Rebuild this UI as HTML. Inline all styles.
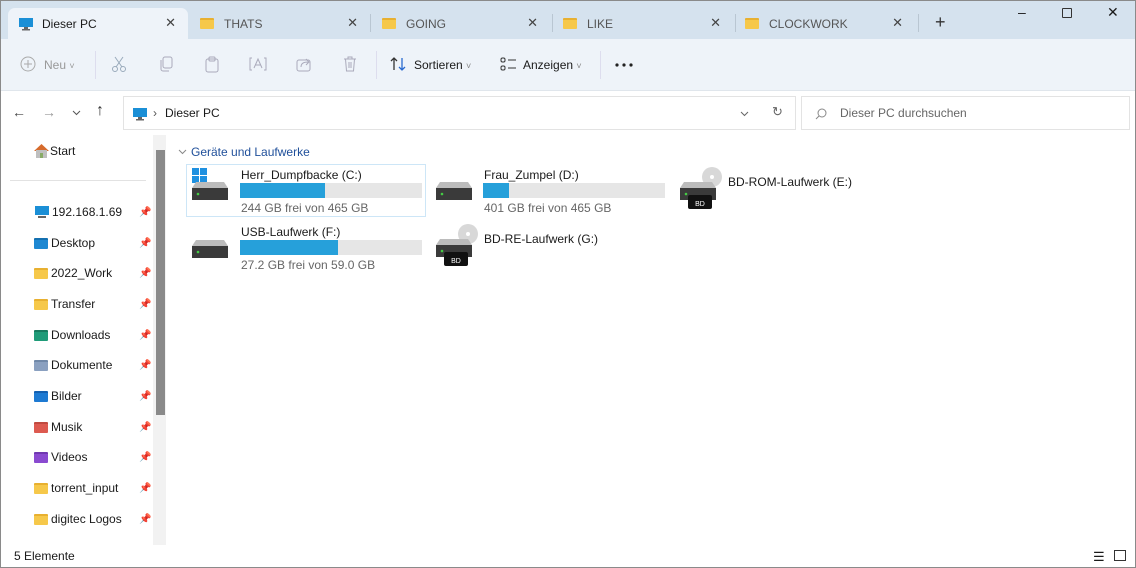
<!DOCTYPE html>
<html><head><meta charset="utf-8"><style>
*{margin:0;padding:0;box-sizing:border-box}
body{width:1136px;height:568px;overflow:hidden;font-family:"Segoe UI","Liberation Sans",sans-serif;font-size:12px;color:#1a1a1a;background:#fff;position:relative}
.frame{position:absolute;inset:0;border:1px solid #8a8a8a;pointer-events:none;z-index:9}
.tabs{position:absolute;left:0;top:0;width:1136px;height:39px;background:#d5e2ee}
.tab{position:absolute;top:8px;height:31px;font-size:12px;display:flex;align-items:center;color:#555}
.tab.act{background:#eef3f9;border-radius:7px 7px 0 0;color:#1a1a1a}
.tab .x{position:absolute;right:12px;top:7px;font-size:13px;color:#444}
.sep{position:absolute;top:14px;width:1px;height:18px;background:#b9c6d2}
.tb{position:absolute;left:0;top:39px;width:1136px;height:52px;background:#eef3f9;border-bottom:1px solid #e0e6ec}
.tb span{position:absolute;top:19px;font-size:12px}
.tb svg{position:absolute;top:17px}
.addr{position:absolute;left:123px;top:96px;width:673px;height:34px;border:1px solid #e3e3e3;background:#fff}
.search{position:absolute;left:801px;top:96px;width:329px;height:34px;border:1px solid #e3e3e3}
.side div.i{position:absolute;left:34px;font-size:12px;display:flex;align-items:center}
.pin{position:absolute;left:139px;color:#888;font-size:10px}
.fold{display:inline-block;width:14px;height:11px;background:#f6c84a;border-radius:1px;margin-right:3px;border-top:2px solid #e8b030}
.bar{position:absolute;height:15px;background:#e6e6e6;width:182px}
.bar i{display:block;height:100%;background:#26a0da}
.muted{color:#666}
</style></head><body>
<div class="tabs">
 <div class="tab act" style="left:8px;width:180px"><svg width="16" height="14" style="margin:0 8px 0 10px"><rect x="1" y="1" width="14" height="9" fill="#1b8fd6"/><rect x="6" y="10" width="4" height="2" fill="#666"/><rect x="4" y="12" width="8" height="1.5" fill="#666"/></svg>Dieser PC<span class="x">✕</span></div>
 <div class="tab" style="left:190px;width:180px"><span class="fold" style="margin:0 10px 0 10px"></span>THATS<span class="x">✕</span></div>
 <div class="sep" style="left:370px"></div>
 <div class="tab" style="left:370px;width:180px"><span class="fold" style="margin:0 10px 0 12px"></span>GOING<span class="x">✕</span></div>
 <div class="sep" style="left:552px"></div>
 <div class="tab" style="left:553px;width:180px"><span class="fold" style="margin:0 10px 0 10px"></span>LIKE<span class="x">✕</span></div>
 <div class="sep" style="left:735px"></div>
 <div class="tab" style="left:735px;width:180px"><span class="fold" style="margin:0 10px 0 10px"></span>CLOCKWORK<span class="x">✕</span></div>
 <div class="sep" style="left:918px"></div>
 <div style="position:absolute;left:935px;top:12px;font-size:18px;color:#333">+</div>
 <div style="position:absolute;left:1018px;top:4px;font-size:14px">–</div>
 <div style="position:absolute;left:1062px;top:8px;width:10px;height:10px;border:1px solid #333;border-radius:1px"></div>
 <div style="position:absolute;left:1107px;top:4px;font-size:14px">✕</div>
</div>
<div class="tb">
 <svg style="left:20px" width="16" height="16" fill="none" stroke="#aaa"><circle cx="8" cy="8" r="7"/><path d="M8 4V12M4 8H12"/></svg><span style="left:44px;color:#999">Neu <span style="position:static;font-size:9px">˅</span></span>
 <div style="position:absolute;left:95px;top:12px;width:1px;height:28px;background:#dde"></div>
 <svg style="left:111px" width="16" height="17" fill="none" stroke="#9ab"><path d="M4 1L11 11M12 1L5 11"/><circle cx="4" cy="13" r="2.5"/><circle cx="12" cy="13" r="2.5"/></svg>
 <svg style="left:158px" width="16" height="16" fill="none" stroke="#aab"><rect x="5" y="1" width="9" height="11" rx="2"/><path d="M3 4V13a2 2 0 0 0 2 2H11"/></svg>
 <svg style="left:204px" width="16" height="17" fill="none" stroke="#aab"><rect x="2" y="3" width="12" height="13" rx="2"/><rect x="5" y="1" width="6" height="4" rx="1"/></svg>
 <svg style="left:249px" width="18" height="16" fill="none" stroke="#aab"><path d="M3 2H1V14H3M15 2H17V14H15"/><path d="M5 12L9 3L13 12M6.5 9H11.5"/></svg>
 <svg style="left:296px" width="16" height="16" fill="none" stroke="#aab"><rect x="1" y="4" width="13" height="11" rx="2"/><path d="M5 11C5 7 8 6 12 6M10 3L13 6L10 9"/></svg>
 <svg style="left:343px" width="14" height="16" fill="none" stroke="#aab"><path d="M1 3H13M5 3V1H9V3M2.5 3L3.5 15H10.5L11.5 3M6 6V12M8 6V12"/></svg>
 <div style="position:absolute;left:376px;top:12px;width:1px;height:28px;background:#dde"></div>
 <svg style="left:390px" width="17" height="16" fill="none" stroke-width="1.3"><path d="M4 14V2M1 5L4 2L7 5" stroke="#333"/><path d="M12 2V14M9 11L12 14L15 11" stroke="#2a6bd0"/></svg><span style="left:414px">Sortieren <span style="position:static;color:#888;font-size:9px">˅</span></span>
 <svg style="left:500px" width="17" height="16" fill="none" stroke="#333"><rect x="1" y="2" width="4" height="4" rx="1.5"/><rect x="1" y="10" width="4" height="4" rx="1.5"/><path d="M8 4H16M8 12H16"/></svg><span style="left:523px">Anzeigen <span style="position:static;color:#888;font-size:9px">˅</span></span>
 <div style="position:absolute;left:600px;top:12px;width:1px;height:28px;background:#dde"></div>
 <svg style="left:615px;top:24px" width="18" height="4"><circle cx="2" cy="2" r="1.6" fill="#222"/><circle cx="9" cy="2" r="1.6" fill="#222"/><circle cx="16" cy="2" r="1.6" fill="#222"/></svg>
</div>
<div style="position:absolute;left:12px;top:104px;font-size:14px;color:#444">←</div>
<div style="position:absolute;left:42px;top:104px;font-size:14px;color:#999">→</div>
<svg style="position:absolute;left:72px;top:110px" width="9" height="6" fill="none" stroke="#555"><path d="M1 1L4.5 4.5L8 1"/></svg>
<div style="position:absolute;left:96px;top:102px;font-size:16px;color:#333">↑</div>
<div class="addr">
 <svg width="16" height="14" style="position:absolute;left:8px;top:10px"><rect x="1" y="1" width="14" height="9" fill="#1b8fd6"/><rect x="6" y="10" width="4" height="2" fill="#666"/><rect x="4" y="12" width="8" height="1.5" fill="#666"/></svg>
 <span style="position:absolute;left:29px;top:9px;color:#555">›</span>
 <span style="position:absolute;left:41px;top:9px">Dieser PC</span>
 <svg style="position:absolute;left:616px;top:14px" width="9" height="6" fill="none" stroke="#666"><path d="M1 1L4.5 4.5L8 1"/></svg>
 <span style="position:absolute;left:648px;top:7px;color:#666;font-size:13px">↻</span>
</div>
<div class="search"><svg style="position:absolute;left:13px;top:11px" width="12" height="12" fill="none" stroke="#888"><circle cx="7" cy="5" r="4"/><path d="M4 8L1 11"/></svg><span style="position:absolute;left:38px;top:9px;color:#666">Dieser PC durchsuchen</span></div>
<div class="side">
 <div class="i" style="top:143px;left:33px"><svg width="17" height="15"><path d="M1 8 L8.5 1 L16 8" fill="#d66b2c"/><rect x="3" y="7" width="11" height="8" fill="#bfbfbf"/><rect x="7" y="10" width="3" height="5" fill="#8a6"/></svg>Start</div>
 <div style="position:absolute;left:10px;top:180px;width:136px;height:1px;background:#e2e2e2"></div>
 <div class="i" style="top:205px"><svg width="16" height="14" style="margin-right:2px"><rect x="1" y="1" width="14" height="9" fill="#1b8fd6"/><rect x="4" y="11" width="8" height="2" fill="#666"/></svg>192.168.1.69</div>
 <div class="i" style="top:236px"><span class="fold" style="background:#1e88d2;border-color:#1470b0"></span>Desktop</div>
 <div class="i" style="top:266px"><span class="fold"></span>2022_Work</div>
 <div class="i" style="top:297px"><span class="fold"></span>Transfer</div>
 <div class="i" style="top:328px"><span class="fold" style="background:#1f9b78;border-color:#177a5e"></span>Downloads</div>
 <div class="i" style="top:358px"><span class="fold" style="background:#8aa0c0;border-color:#7088a8"></span>Dokumente</div>
 <div class="i" style="top:389px"><span class="fold" style="background:#1e7ad2;border-color:#1460b0"></span>Bilder</div>
 <div class="i" style="top:420px"><span class="fold" style="background:#dd5a50;border-color:#c04a40"></span>Musik</div>
 <div class="i" style="top:450px"><span class="fold" style="background:#8a4ad0;border-color:#7038b0"></span>Videos</div>
 <div class="i" style="top:481px"><span class="fold"></span>torrent_input</div>
 <div class="i" style="top:512px"><span class="fold"></span>digitec Logos</div>
 <div class="pin" style="top:207px">📌</div><div class="pin" style="top:238px">📌</div><div class="pin" style="top:268px">📌</div><div class="pin" style="top:299px">📌</div><div class="pin" style="top:330px">📌</div><div class="pin" style="top:360px">📌</div><div class="pin" style="top:391px">📌</div><div class="pin" style="top:422px">📌</div><div class="pin" style="top:452px">📌</div><div class="pin" style="top:483px">📌</div><div class="pin" style="top:514px">📌</div>
</div>
<div style="position:absolute;left:153px;top:135px;width:13px;height:410px;background:#f2f2f2"></div>
<div style="position:absolute;left:156px;top:150px;width:9px;height:265px;background:#8a8a8a"></div>
<div style="position:absolute;left:14px;top:549px">5 Elemente</div>
<div style="position:absolute;left:1093px;top:549px;font-size:13px">☰</div>
<div style="position:absolute;left:1114px;top:550px;width:12px;height:11px;border:1.5px solid #333"></div>

<svg style="position:absolute;left:178px;top:149px" width="9" height="6" fill="none" stroke="#888"><path d="M1 1L4.5 4.5L8 1"/></svg>
<div style="position:absolute;left:191px;top:145px;color:#1f4f9a">Geräte und Laufwerke</div>
<div style="position:absolute;left:186px;top:164px;width:240px;height:53px;border:1px solid #cde6f7"></div>

<svg style="position:absolute;left:190px;top:168px" width="40" height="36"><rect x="2" y="0" width="7" height="7" fill="#1e90e0"/><rect x="10" y="0" width="7" height="7" fill="#1e90e0"/><rect x="2" y="8" width="7" height="7" fill="#1e90e0"/><rect x="10" y="8" width="7" height="7" fill="#1e90e0"/><path d="M6 14 H34 L38 20 H2 Z" fill="#bcbcbc"/><rect x="2" y="20" width="36" height="12" fill="#3a3a3a"/><circle cx="8" cy="26" r="1.3" fill="#4c4"/></svg>
<div style="position:absolute;left:241px;top:168px">Herr_Dumpfbacke (C:)</div>
<div class="bar" style="left:240px;top:183px"><i style="width:85px"></i></div>
<div class="muted" style="position:absolute;left:241px;top:201px">244 GB frei von 465 GB</div>

<svg style="position:absolute;left:434px;top:168px" width="40" height="36"><path d="M6 14 H34 L38 20 H2 Z" fill="#bcbcbc"/><rect x="2" y="20" width="36" height="12" fill="#3a3a3a"/><circle cx="8" cy="26" r="1.3" fill="#4c4"/></svg>
<div style="position:absolute;left:484px;top:168px">Frau_Zumpel (D:)</div>
<div class="bar" style="left:483px;top:183px"><i style="width:26px"></i></div>
<div class="muted" style="position:absolute;left:484px;top:201px">401 GB frei von 465 GB</div>

<svg style="position:absolute;left:678px;top:165px" width="46" height="46"><circle cx="34" cy="12" r="10" fill="#d8d8d8"/><circle cx="34" cy="12" r="2" fill="#fff"/><path d="M6 17 H34 L38 23 H2 Z" fill="#bcbcbc"/><rect x="2" y="23" width="36" height="12" fill="#3a3a3a"/><circle cx="8" cy="29" r="1.3" fill="#4c4"/><rect x="10" y="30" width="24" height="14" rx="2" fill="#111"/><text x="22" y="41" font-size="7" fill="#fff" text-anchor="middle" font-family="Liberation Sans">BD</text></svg>
<div style="position:absolute;left:728px;top:175px">BD-ROM-Laufwerk (E:)</div>

<svg style="position:absolute;left:190px;top:226px" width="40" height="36"><path d="M6 14 H34 L38 20 H2 Z" fill="#bcbcbc"/><rect x="2" y="20" width="36" height="12" fill="#3a3a3a"/><circle cx="8" cy="26" r="1.3" fill="#4c4"/></svg>
<div style="position:absolute;left:241px;top:225px">USB-Laufwerk (F:)</div>
<div class="bar" style="left:240px;top:240px"><i style="width:98px"></i></div>
<div class="muted" style="position:absolute;left:241px;top:258px">27.2 GB frei von 59.0 GB</div>

<svg style="position:absolute;left:434px;top:222px" width="46" height="46"><circle cx="34" cy="12" r="10" fill="#d8d8d8"/><circle cx="34" cy="12" r="2" fill="#fff"/><path d="M6 17 H34 L38 23 H2 Z" fill="#bcbcbc"/><rect x="2" y="23" width="36" height="12" fill="#3a3a3a"/><circle cx="8" cy="29" r="1.3" fill="#4c4"/><rect x="10" y="30" width="24" height="14" rx="2" fill="#111"/><text x="22" y="41" font-size="7" fill="#fff" text-anchor="middle" font-family="Liberation Sans">BD</text></svg>
<div style="position:absolute;left:484px;top:232px">BD-RE-Laufwerk (G:)</div>
<div class="frame"></div>
</body></html>
